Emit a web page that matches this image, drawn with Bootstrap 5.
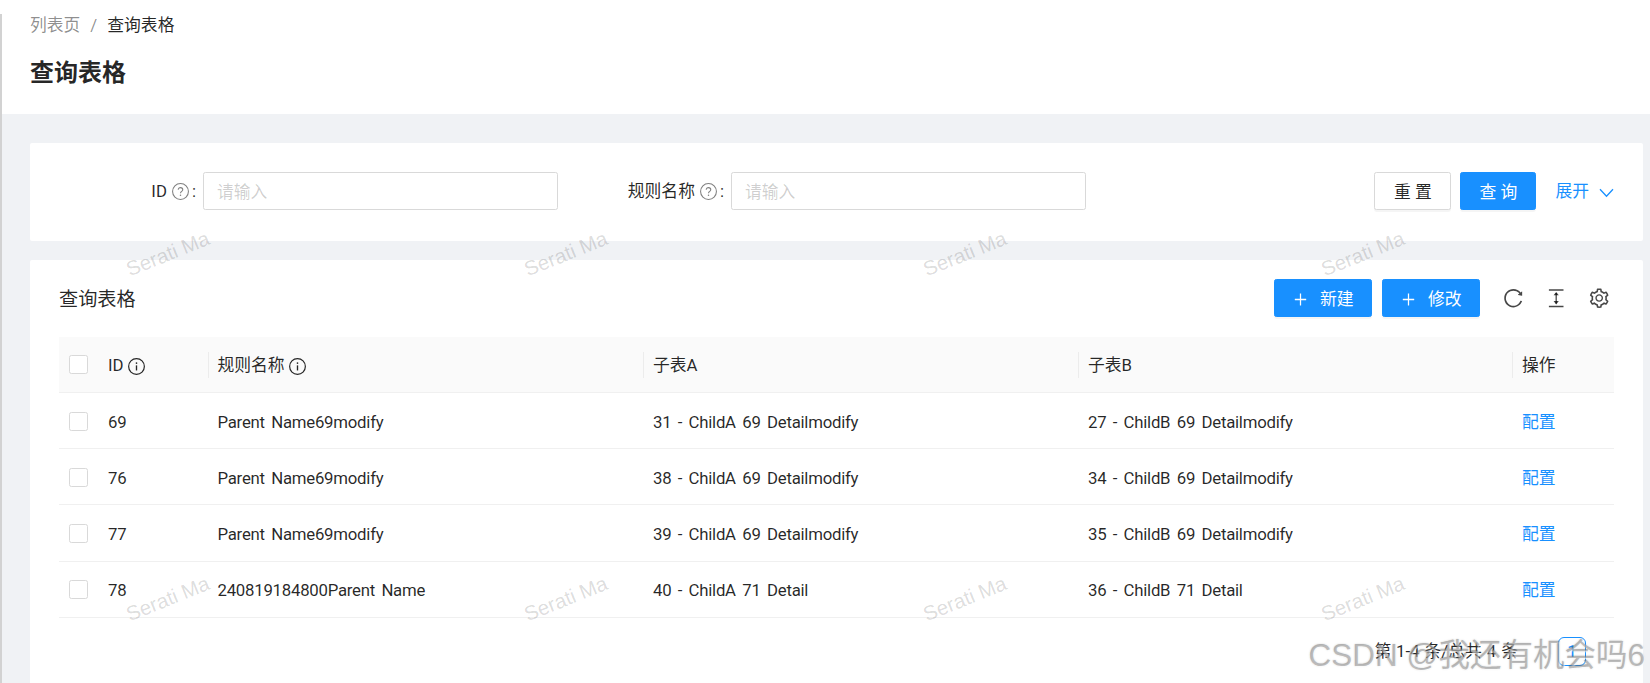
<!DOCTYPE html>
<html lang="zh-CN">
<head>
<meta charset="utf-8">
<title>查询表格</title>
<link rel="stylesheet" href="https://cdn.jsdelivr.net/npm/bootstrap@5.3.0/dist/css/bootstrap.min.css">
<style>
html,body{height:683px;overflow:hidden}
body{background:#f0f2f5;font-family:Roboto,"Noto Sans CJK SC",sans-serif;font-size:16.8px;color:rgba(0,0,0,.85);position:relative}
.edge-strip{position:absolute;left:0;top:14px;bottom:0;width:2px;background:#d2d2d2;z-index:5}
.page-head{height:114px;background:#fff;padding:12px 30px 0}
.page-head .breadcrumb{margin:0;height:26px;align-items:center;--bs-breadcrumb-divider-color:rgba(0,0,0,.45);--bs-breadcrumb-item-padding-x:10px}
.page-head .breadcrumb-item{color:rgba(0,0,0,.45);line-height:26px}
.page-head .breadcrumb-item.active{color:rgba(0,0,0,.85)}
.page-title{font-size:24px;font-weight:700;line-height:34px;margin:18px 0 0;color:rgba(0,0,0,.85)}
.main-area{padding:29px 7px 0 30px}
.panel{background:#fff;border-radius:2px}
.search-panel{height:98px;padding:29px 0 0;margin-bottom:19px}
.field-label{display:flex;align-items:center;justify-content:flex-end;gap:5px;height:38px;white-space:nowrap;padding:2px 7px 0 0;flex:0 0 auto}
.lbl-a{width:173px}
.lbl-b{width:173.5px}
.search-panel .form-control{width:354.5px;height:38px;border:1px solid #d9d9d9;border-radius:2.4px;font-size:16.8px;padding:6px 13px 4px;color:rgba(0,0,0,.85);flex:0 0 auto}
.search-panel .form-control::placeholder{color:rgba(0,0,0,.2)}
.hint-ico{width:17px;height:17px;color:rgba(0,0,0,.5);margin:-1px -2px 0 0}
.info-ico{width:17px;height:17px;color:rgba(0,0,0,.85)}
.btn-ant{height:38px;border-radius:2.4px;font-size:16.8px;line-height:1;padding:2px 0 0;display:inline-flex;align-items:center;justify-content:center;--bs-btn-bg:#1890ff;--bs-btn-border-color:#1890ff;--bs-btn-color:#fff;--bs-btn-hover-bg:#1890ff;--bs-btn-hover-border-color:#1890ff;--bs-btn-hover-color:#fff;box-shadow:0 2px 0 rgba(0,0,0,.04)}
.btn-plain{width:77px;--bs-btn-bg:#fff;--bs-btn-border-color:#d9d9d9;--bs-btn-color:rgba(0,0,0,.85)}
.btn-query{width:76px;margin-left:9px}
.btn-new{width:98px;gap:11px}
.btn-edit{margin-left:10px}
.expand-link{color:#1890ff;text-decoration:none;display:inline-flex;align-items:center;gap:10px;margin-left:19px;margin-right:29px;padding-top:2px}
.table-panel{padding:0 30px 0 29px;height:500px}
.tool-row{height:77px;padding-top:19px;align-items:flex-start}
.tool-title{font-size:19.2px;line-height:42px}
.tool-ico{width:22.4px;height:22.4px;color:rgba(0,0,0,.72);display:block}
.tools{display:flex;gap:20.6px;margin-left:21.8px;height:38px;align-items:center;margin-right:3px}
.data-table{table-layout:fixed;width:1554.5px;margin:0;--bs-table-color:rgba(0,0,0,.85);--bs-table-border-color:#f0f0f0;font-size:16.8px}
.data-table th{background:#fafafa;font-weight:400;height:55.5px;padding:2px 10px 0;vertical-align:middle;position:relative;border-bottom:1px solid #f0f0f0}
.data-table td{height:56.2px;padding:3px 10px 0;vertical-align:middle;border-bottom:1px solid #f0f0f0;white-space:nowrap}
.data-table tbody td{letter-spacing:-.25px;word-spacing:2.5px}
.data-table th.sep::before{content:"";position:absolute;left:0;top:15px;height:26px;width:1px;background:#ececec}
.data-table .form-check-input{width:19px;height:19px;margin:-2px 0 0;border:1px solid #d9d9d9;border-radius:2.4px;display:block}
.data-table .check-cell{padding-left:10px;padding-right:0}
.op-link{color:#1890ff;text-decoration:none;letter-spacing:0}
.pager-row{height:75px;align-items:flex-start;padding-top:19px;margin-right:27px}
.pager-row .pagination{margin:0;align-items:center}
.pager-row .page-link{width:28px;height:29px;padding:0;display:flex;align-items:center;justify-content:center;border:1px solid #1890ff;border-radius:2.4px;color:#1890ff;background:#fff;font-size:16.8px}
.pager-text{line-height:29px;margin-right:40px;color:rgba(0,0,0,.85);word-spacing:.8px}
.wm{position:absolute;transform:translate(-50%,-50%) rotate(-22deg);font-family:"Liberation Sans",sans-serif;font-size:20.5px;color:rgba(0,0,0,.15);white-space:nowrap;pointer-events:none;z-index:6}
.wm-1{left:168px;top:254px}.wm-2{left:566px;top:254px}.wm-3{left:965px;top:254px}.wm-4{left:1363px;top:254px}
.wm-5{left:168px;top:599px}.wm-6{left:566px;top:599px}.wm-7{left:965px;top:599px}.wm-8{left:1363px;top:599px}
.csdn-mark{position:absolute;right:5px;top:634px;font-family:"Liberation Sans","Noto Sans CJK SC",sans-serif;font-size:31.5px;line-height:42px;color:rgba(110,110,110,.42);text-shadow:1px 1px 1px rgba(255,255,255,.6),0 0 2px rgba(0,0,0,.18);white-space:nowrap;z-index:7;pointer-events:none}
</style>
</head>
<body>
<svg width="0" height="0" class="position-absolute">
  <symbol id="i-q" viewBox="0 0 24 24"><circle cx="12" cy="12" r="11.2" fill="none" stroke="currentColor" stroke-width="1.5"/><path d="M8.8 9.6c0-1.9 1.4-3.1 3.2-3.1s3.2 1.2 3.2 2.9c0 2.4-3.2 2.6-3.2 5.1" fill="none" stroke="currentColor" stroke-width="1.5"/><circle cx="12" cy="17.4" r="1.1" fill="currentColor"/></symbol>
  <symbol id="i-i" viewBox="0 0 24 24"><circle cx="12" cy="12" r="11.1" fill="none" stroke="currentColor" stroke-width="1.7"/><path d="M12 10.4v7.2" stroke="currentColor" stroke-width="1.9"/><circle cx="12" cy="7.2" r="1.2" fill="currentColor"/></symbol>
  <symbol id="i-plus" viewBox="0 0 1024 1024"><path fill="currentColor" d="M482 152h60q8 0 8 8v704q0 8-8 8h-60q-8 0-8-8V160q0-8 8-8z"/><path fill="currentColor" d="M176 474h672q8 0 8 8v60q0 8-8 8H176q-8 0-8-8v-60q0-8 8-8z"/></symbol>
</svg>
<div class="edge-strip"></div>

<header class="page-head">
  <nav aria-label="breadcrumb">
    <ol class="breadcrumb">
      <li class="breadcrumb-item">列表页</li>
      <li class="breadcrumb-item active" aria-current="page">查询表格</li>
    </ol>
  </nav>
  <h1 class="page-title">查询表格</h1>
</header>

<main class="main-area">
  <section class="panel search-panel d-flex align-items-start">
    <div class="field-label lbl-a">ID <svg class="hint-ico"><use href="#i-q"/></svg>:</div>
    <input class="form-control" type="text" placeholder="请输入">
    <div class="field-label lbl-b">规则名称 <svg class="hint-ico"><use href="#i-q"/></svg>:</div>
    <input class="form-control" type="text" placeholder="请输入">
    <div class="ms-auto d-flex align-items-center">
      <button class="btn btn-ant btn-plain" type="button">重 置</button>
      <button class="btn btn-ant btn-query" type="button">查 询</button>
      <a class="expand-link" href="#">展开
        <svg width="15" height="15" viewBox="0 0 15 15"><path d="M1 4.2l6.5 7 6.5-7" fill="none" stroke="currentColor" stroke-width="1.3"/></svg>
      </a>
    </div>
  </section>

  <section class="panel table-panel">
    <div class="tool-row d-flex">
      <div class="tool-title">查询表格</div>
      <div class="ms-auto d-flex align-items-center">
        <button class="btn btn-ant btn-new" type="button"><svg width="17" height="17"><use href="#i-plus"/></svg>新建</button>
        <button class="btn btn-ant btn-new btn-edit" type="button"><svg width="17" height="17"><use href="#i-plus"/></svg>修改</button>
      </div>
      <div class="tools">
        <svg class="tool-ico" viewBox="0 0 1024 1024"><path fill="currentColor" d="M909.1 209.3l-56.4 44.1C775.8 155.1 656.2 92 521.9 92 290 92 102.3 279.5 102 511.5 101.7 743.7 289.8 932 521.9 932c181.3 0 335.8-115 394.6-276.1 1.5-4.2-.7-8.9-4.9-10.3l-56.7-19.5a8 8 0 0 0-10.1 4.8c-1.8 5-3.8 10-5.9 14.9-17.3 41-42.1 77.8-73.7 109.4A344.77 344.77 0 0 1 655.9 829c-42.3 17.9-87.4 27-133.8 27-46.5 0-91.5-9.1-133.8-27A341.5 341.5 0 0 1 279 755.2a342.16 342.16 0 0 1-73.7-109.4c-17.9-42.4-27-87.4-27-133.9s9.1-91.5 27-133.9c17.3-41 42.1-77.8 73.7-109.4 31.6-31.6 68.4-56.4 109.3-73.8 42.3-17.9 87.4-27 133.8-27 46.5 0 91.5 9.1 133.8 27a341.5 341.5 0 0 1 109.3 73.8c9.9 9.9 19.2 20.4 27.8 31.4l-60.2 47a8 8 0 0 0 3 14.1l175.6 43c5 1.2 9.9-2.6 9.9-7.7l.8-180.9c-.1-6.6-7.8-10.3-13-6.2z"/></svg>
        <svg class="tool-ico" viewBox="0 0 22.4 22.4"><path d="M3.9 2.9h14.6M3.9 19.5h14.6" stroke="currentColor" stroke-width="1.5" fill="none"/><path d="M11.2 6v10.4" stroke="currentColor" stroke-width="1.3"/><path d="M11.2 4.9l2.6 3.4H8.6zM11.2 17.5l2.6-3.4H8.6z" fill="currentColor"/></svg>
        <svg class="tool-ico" viewBox="0 0 1024 1024"><path fill="currentColor" d="M924.8 625.7l-65.5-56c3.1-19 4.7-38.4 4.7-57.8s-1.6-38.8-4.7-57.8l65.5-56a32.03 32.03 0 0 0 9.3-35.2l-.9-2.6a443.74 443.74 0 0 0-79.7-137.9l-1.8-2.1a32.12 32.12 0 0 0-35.1-9.5l-81.3 28.9c-30-24.6-63.5-44-99.7-57.6l-15.7-85a32.05 32.05 0 0 0-25.8-25.7l-2.7-.5c-52.1-9.4-106.9-9.4-159 0l-2.7.5a32.05 32.05 0 0 0-25.8 25.7l-15.8 85.4a351.86 351.86 0 0 0-99 57.4l-81.9-29.1a32 32 0 0 0-35.1 9.5l-1.8 2.1a446.02 446.02 0 0 0-79.7 137.9l-.9 2.6c-4.5 12.5-.8 26.5 9.3 35.2l66.3 56.6c-3.1 18.8-4.6 38-4.6 57.1 0 19.2 1.5 38.4 4.6 57.1L99 625.5a32.03 32.03 0 0 0-9.3 35.2l.9 2.6c18.1 50.4 44.9 96.9 79.7 137.9l1.8 2.1a32.12 32.12 0 0 0 35.1 9.5l81.9-29.1c29.8 24.5 63.1 43.9 99 57.4l15.8 85.4a32.05 32.05 0 0 0 25.8 25.7l2.7.5a449.4 449.4 0 0 0 159 0l2.7-.5a32.05 32.05 0 0 0 25.8-25.7l15.7-85a350 350 0 0 0 99.7-57.6l81.3 28.9a32 32 0 0 0 35.1-9.5l1.8-2.1c34.8-41.1 61.6-87.5 79.7-137.9l.9-2.6c4.5-12.3.8-26.3-9.3-35zM788.3 465.9c2.5 15.1 3.8 30.6 3.8 46.1s-1.3 31-3.8 46.1l-6.6 40.1 74.7 63.9a370.03 370.03 0 0 1-42.6 73.6L721 702.8l-31.4 25.8c-23.9 19.6-50.5 35-79.3 45.8l-38.1 14.3-17.9 97a377.5 377.5 0 0 1-85 0l-17.9-97.2-37.8-14.5c-28.5-10.8-55-26.2-78.7-45.7l-31.4-25.9-93.4 33.2c-17-22.9-31.2-47.6-42.6-73.6l75.5-64.5-6.5-40c-2.4-14.9-3.7-30.3-3.7-45.5 0-15.3 1.2-30.6 3.7-45.5l6.5-40-75.5-64.5c11.3-26.1 25.6-50.7 42.6-73.6l93.4 33.2 31.4-25.9c23.7-19.5 50.2-34.9 78.7-45.7l37.9-14.3 17.9-97.2c28.1-3.2 56.8-3.2 85 0l17.9 97 38.1 14.3c28.7 10.8 55.4 26.2 79.3 45.8l31.4 25.8 92.8-32.9c17 22.9 31.2 47.6 42.6 73.6L781.8 426l6.5 39.9zM512 326c-97.2 0-176 78.8-176 176s78.8 176 176 176 176-78.8 176-176-78.8-176-176-176zm79.2 255.2A111.6 111.6 0 0 1 512 614c-29.9 0-58-11.7-79.2-32.8A111.6 111.6 0 0 1 400 502c0-29.9 11.7-58 32.8-79.2C454 401.6 482.1 390 512 390c29.9 0 58 11.6 79.2 32.8A111.6 111.6 0 0 1 624 502c0 29.9-11.7 58-32.8 79.2z"/></svg>
      </div>
    </div>

    <table class="table data-table">
      <colgroup><col style="width:39px"><col style="width:109.5px"><col style="width:435.5px"><col style="width:435px"><col style="width:434px"><col></colgroup>
      <thead>
        <tr>
          <th class="check-cell"><input class="form-check-input" type="checkbox" aria-label="全选"></th>
          <th>ID <svg class="info-ico align-text-bottom"><use href="#i-i"/></svg></th>
          <th class="sep">规则名称 <svg class="info-ico align-text-bottom"><use href="#i-i"/></svg></th>
          <th class="sep">子表A</th>
          <th class="sep">子表B</th>
          <th class="sep">操作</th>
        </tr>
      </thead>
      <tbody>
        <tr><td class="check-cell"><input class="form-check-input" type="checkbox" aria-label="选择"></td><td>69</td><td>Parent Name69modify</td><td>31 - ChildA 69 Detailmodify</td><td>27 - ChildB 69 Detailmodify</td><td><a class="op-link" href="#">配置</a></td></tr>
        <tr><td class="check-cell"><input class="form-check-input" type="checkbox" aria-label="选择"></td><td>76</td><td>Parent Name69modify</td><td>38 - ChildA 69 Detailmodify</td><td>34 - ChildB 69 Detailmodify</td><td><a class="op-link" href="#">配置</a></td></tr>
        <tr><td class="check-cell"><input class="form-check-input" type="checkbox" aria-label="选择"></td><td>77</td><td>Parent Name69modify</td><td>39 - ChildA 69 Detailmodify</td><td>35 - ChildB 69 Detailmodify</td><td><a class="op-link" href="#">配置</a></td></tr>
        <tr><td class="check-cell"><input class="form-check-input" type="checkbox" aria-label="选择"></td><td>78</td><td>240819184800Parent Name</td><td>40 - ChildA 71 Detail</td><td>36 - ChildB 71 Detail</td><td><a class="op-link" href="#">配置</a></td></tr>
      </tbody>
    </table>

    <div class="pager-row d-flex justify-content-end">
      <span class="pager-text">第 1-4 条/总共 4 条</span>
      <ul class="pagination">
        <li class="page-item active"><a class="page-link" href="#">1</a></li>
      </ul>
    </div>
  </section>
</main>

<span class="wm wm-1">Serati Ma</span><span class="wm wm-2">Serati Ma</span><span class="wm wm-3">Serati Ma</span><span class="wm wm-4">Serati Ma</span>
<span class="wm wm-5">Serati Ma</span><span class="wm wm-6">Serati Ma</span><span class="wm wm-7">Serati Ma</span><span class="wm wm-8">Serati Ma</span>
<div class="csdn-mark">CSDN @我还有机会吗6</div>
</body>
</html>
